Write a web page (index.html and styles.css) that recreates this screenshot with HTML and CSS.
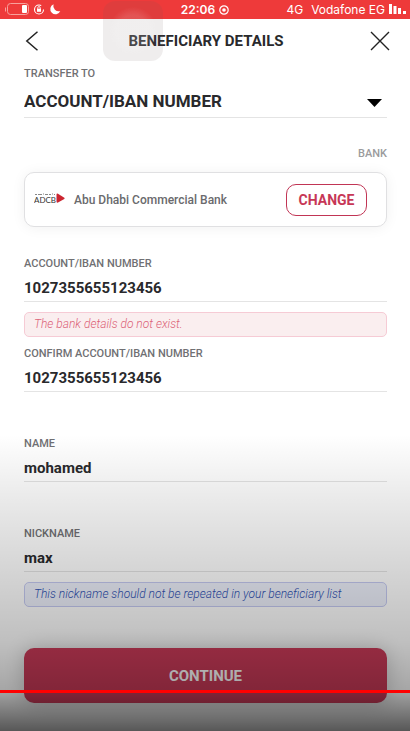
FILE: index.html
```html
<!DOCTYPE html>
<html lang="en">
<head>
<meta charset="utf-8">
<meta name="viewport" content="width=device-width, initial-scale=1">
<title>Beneficiary details</title>
<link rel="stylesheet" href="styles.css">
</head>
<body>
<div class="screen">
  <div class="status">
    <div class="status-left">
      <svg width="62" height="19" viewBox="0 0 62 19" aria-hidden="true">
        <path d="M5.500 7.500v4" stroke="#f8a09b" stroke-width="1"/>
        <rect x="7.500" y="3.500" width="21" height="11" rx="3" fill="none" stroke="#f8a09b"/>
        <rect x="22" y="5" width="5" height="8" rx="1" fill="#fff"/>
        <circle cx="39" cy="9.500" r="4.500" fill="none" stroke="#fff" stroke-width="1.100" stroke-dasharray="23 5"/>
        <rect x="37" y="8.800" width="4" height="3" fill="#fff"/>
        <path d="M37.800 9V7.800a1.200 1.200 0 0 1 2.400 0V9" fill="none" stroke="#fff" stroke-width=".9"/>
        <path d="M53.500 4.300a5.200 5.200 0 1 0 6.800 6.800A5.500 5.500 0 0 1 53.500 4.300z" fill="#fff"/>
      </svg>
    </div>
    <div class="status-time">
      <span>22:06</span>
      <svg width="10" height="10" viewBox="0 0 10 10" aria-hidden="true"><circle cx="5" cy="5" r="4.200" fill="none" stroke="#fff" stroke-width="1.200"/><circle cx="5" cy="5" r="1.800" fill="#fff"/></svg>
    </div>
    <div class="status-right">
      <span>4G</span>
      <span class="carrier">Vodafone EG</span>
      <svg width="17" height="11" viewBox="0 0 17 11" aria-hidden="true"><path d="M0 0h3v10H0zM4.500 2h3v8h-3zM9 4h3v6H9zM14 7h3v3h-3z" fill="#fff"/></svg>
    </div>
  </div>

  <header class="header">
    <button class="icon-button" type="button" aria-label="Back">
      <svg width="20" height="20" viewBox="0 0 20 20"><path d="M15.500 .8L4.800 10l10.700 9.200" fill="none" stroke="#222" stroke-width="1.500"/></svg>
    </button>
    <h1>BENEFICIARY DETAILS</h1>
    <button class="icon-button" type="button" aria-label="Close">
      <svg width="20" height="20" viewBox="0 0 20 20"><path d="M1 1l18 18M19 1L1 19" fill="none" stroke="#222" stroke-width="1.400"/></svg>
    </button>
  </header>

  <form class="form">
    <div class="field transfer">
      <label for="transfer">TRANSFER TO</label>
      <div class="select-row">
        <select id="transfer"><option>ACCOUNT/IBAN NUMBER</option></select>
        <svg class="caret" width="15" height="8" viewBox="0 0 15 8" aria-hidden="true"><path d="M0 0h15L7.500 8z" fill="#000"/></svg>
      </div>
    </div>

    <p class="bank-label">BANK</p>
    <div class="bank-card">
      <svg class="bank-logo" width="31" height="14" viewBox="0 0 31 14" role="img" aria-label="ADCB">
        <path d="M1 1.500h2m1 0h4m1-.5h1m1 .5h3m1 0h2m1-.5h1m1 .5h1" stroke="#888" stroke-width="1"/>
        <text x="0" y="10" class="logo-text">ADCB</text>
        <path d="M22.500 1.800q0-1.600 1.500-1.100l6.300 4q.7.600 0 1.200l-6.300 3.600q-1.500.5-1.500-1z" fill="#cb2530"/>
      </svg>
      <span class="bank-name">Abu Dhabi Commercial Bank</span>
      <button class="change" type="button">CHANGE</button>
    </div>

    <div class="field">
      <label for="account">ACCOUNT/IBAN NUMBER</label>
      <input id="account" type="text" value="1027355655123456">
      <div class="note-area"><p class="note error">The bank details do not exist.</p></div>
    </div>
    <div class="field">
      <label for="confirm">CONFIRM ACCOUNT/IBAN NUMBER</label>
      <input id="confirm" type="text" value="1027355655123456">
      <div class="note-area"></div>
    </div>
    <div class="field">
      <label for="name">NAME</label>
      <input id="name" type="text" value="mohamed">
      <div class="note-area"></div>
    </div>
    <div class="field">
      <label for="nickname">NICKNAME</label>
      <input id="nickname" type="text" value="max">
      <div class="note-area"><p class="note info">This nickname should not be repeated in your beneficiary list</p></div>
    </div>
    <button class="continue" type="submit">CONTINUE</button>
  </form>

  <div class="touch"></div>
  <div class="shade"></div>
  <div class="playback"></div>
</div>
</body>
</html>
```
FILE: styles.css
```css
* {
  box-sizing: border-box;
}

body {
  margin: 0;
  background: #fff;
  color: #29292c;
  font-family: Roboto, "Liberation Sans", sans-serif;
}

h1,
p {
  margin: 0;
}

button,
input,
select {
  font-family: inherit;
  color: inherit;
}

.screen {
  position: relative;
  min-height: 100vh;
  overflow: hidden;
}

.status {
  display: grid;
  grid-template-columns: 1fr auto 1fr;
  align-items: center;
  height: 19px;
  background: #ee3a3a;
  color: #fff;
  font-family: Inter, sans-serif;
  font-size: 12px;
  line-height: 19px;
}

.status svg {
  display: block;
}

.status-time,
.status-right {
  display: flex;
  align-items: center;
  gap: 4px;
}

.status-time {
  font-weight: 600;
  font-size: 12px;
}

.status-right {
  justify-content: flex-end;
  padding-right: 4px;
}

.carrier {
  margin-left: 4px;
}

.header {
  display: flex;
  align-items: center;
  justify-content: space-between;
  height: 44px;
  padding: 0 20px 0 22px;
}

.header h1 {
  font-size: 15px;
  line-height: 20px;
  font-weight: 700;
}

.icon-button {
  display: flex;
  padding: 0;
  border: 0;
  background: none;
}

.form {
  display: flex;
  flex-direction: column;
  padding: 2px 23px 28px 24px;
}

.field {
  display: flex;
  flex-direction: column;
}

.field label {
  font-size: 11px;
  line-height: 18px;
  font-weight: 500;
  color: #707073;
}

.field input,
.field select {
  width: 100%;
  height: 29px;
  padding: 0;
  border: 0;
  border-bottom: 1px solid #e4e4e4;
  border-radius: 0;
  outline: 0;
  background: none;
  appearance: none;
  font-size: 15px;
  font-weight: 700;
}

.field input {
  padding-top: 1px;
}

.select-row {
  position: relative;
}

.field select {
  display: block;
  height: 35px;
  padding-top: 2px;
  font-size: 17px;
}

.caret {
  position: absolute;
  right: 5px;
  top: 16px;
  pointer-events: none;
}

.bank-label {
  margin-top: 27px;
  font-size: 11px;
  line-height: 18px;
  font-weight: 500;
  text-align: right;
  color: #9b9b9d;
}

.bank-card {
  display: flex;
  align-items: center;
  height: 55px;
  margin: 9px 0 28px;
  padding: 0 19px 0 9px;
  border: 1px solid #e0e0e2;
  border-radius: 10px;
  background: #fff;
  box-shadow: 0 1px 14px rgba(0, 0, 0, 0.06);
}

.bank-logo {
  margin-right: 9px;
}

.logo-text {
  font-family: Lato, sans-serif;
  font-size: 8px;
  fill: #333;
}

.bank-name {
  flex: 1;
  font-size: 12px;
  font-weight: 500;
  color: #6a6a6d;
}

.change {
  width: 81px;
  height: 32px;
  padding: 0;
  border: 1px solid #c13555;
  border-radius: 10px;
  background: #fff;
  color: #c73756;
  font-size: 14px;
  font-weight: 700;
}

.note-area {
  min-height: 43px;
  padding: 10px 0 8px;
}

.note {
  padding: 0 9px;
  border: 1px solid;
  border-radius: 5px;
  font-size: 12px;
  line-height: 23px;
  font-weight: 300;
  font-style: italic;
}

.error {
  border-color: #f6cbd5;
  background: #faeeef;
  color: #dc6378;
}

.info {
  border-color: #c5caf2;
  background: #eef1fc;
  color: #2f52b4;
}

.continue {
  height: 55px;
  margin-top: 33px;
  border: 0;
  border-radius: 10px;
  background: #c93a58;
  color: #fff;
  font-size: 15px;
  font-weight: 700;
  box-shadow: 0 0 20px rgba(0, 0, 0, 0.2);
}

.touch {
  position: absolute;
  top: 1px;
  left: 103px;
  width: 60px;
  height: 60px;
  border-radius: 12px;
  background: radial-gradient(circle at 50% 50%, rgba(255, 255, 255, 0.12) 0 16px, transparent 24px), rgba(105, 90, 90, 0.11);
  pointer-events: none;
}

.shade {
  position: absolute;
  right: 0;
  bottom: 0;
  left: 0;
  height: 296px;
  background: linear-gradient(transparent, rgba(0, 0, 0, 0.08) 20%, rgba(0, 0, 0, 0.18) 50%, rgba(0, 0, 0, 0.25) 70%, rgba(0, 0, 0, 0.35) 86%, rgba(0, 0, 0, 0.66));
  pointer-events: none;
}

.playback {
  position: absolute;
  right: 0;
  bottom: 38px;
  left: 0;
  height: 3px;
  background: #f00;
}
```
